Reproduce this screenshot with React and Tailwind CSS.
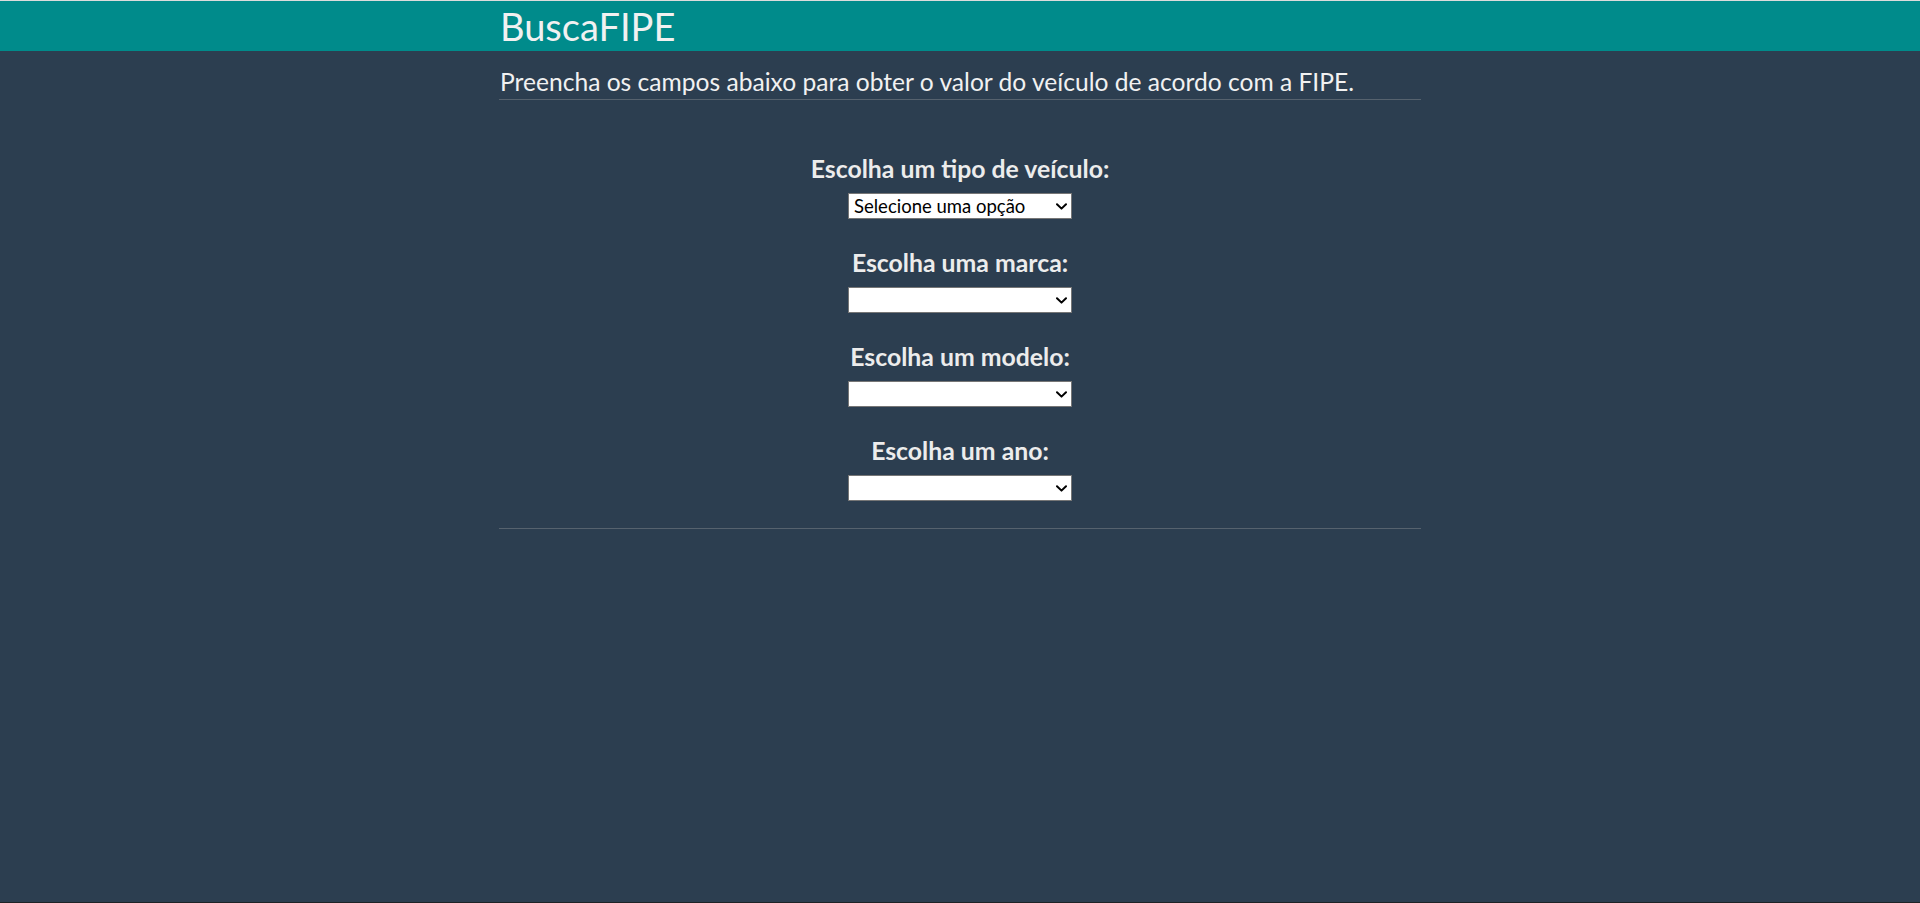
import React from "react";

function Field({ label, placeholder }) {
  return (
    <div className="flex flex-col items-center">
      <label className="text-[24.8px] leading-[29px] font-bold text-[#ececec]">{label}</label>
      <div className="relative mt-[10px] w-[224px] h-[26px]">
        <select
          className="appearance-none w-full h-full border border-[#767676] bg-white text-black text-[18.5px] leading-[22px] pl-[5px] pr-[20px] rounded-none outline-none"
          style={{ fontFamily: "Lato, 'Liberation Sans', sans-serif" }}
          defaultValue=""
        >
          {placeholder ? <option value="">{placeholder}</option> : <option value=""></option>}
        </select>
        <svg
          className="pointer-events-none absolute right-[5px] top-[10px]"
          width="11"
          height="7"
          viewBox="0 0 11 7"
          fill="none"
        >
          <path d="M1 1.2 L5.5 5.6 L10 1.2" stroke="#000" strokeWidth="2" strokeLinecap="round" strokeLinejoin="round" />
        </svg>
      </div>
    </div>
  );
}

export default function App() {
  return (
    <div
      className="h-screen flex flex-col bg-[#2c3e50] overflow-hidden"
      style={{ fontFamily: "Lato, 'Liberation Sans', sans-serif" }}
    >
      <div className="h-px bg-[#dcdcdc] shrink-0" />
      <header className="h-[50px] bg-[#008b8b] shrink-0">
        <div className="w-[922px] mx-auto pl-px">
          <h1 className="text-[38px] leading-[50px] font-normal text-[#f1f1f1]">BuscaFIPE</h1>
        </div>
      </header>
      <main className="flex-1">
        <div className="w-[922px] mx-auto">
          <p className="mt-4 pl-px text-[24.6px] leading-[29px] text-[#f1f1f1]">
            Preencha os campos abaixo para obter o valor do veículo de acordo com a FIPE.
          </p>
          <div className="mt-[3px] h-px bg-[#56626e]" />
          <div className="pt-[54px] pb-[27px] flex flex-col gap-[29px]">
            <Field label="Escolha um tipo de veículo:" placeholder="Selecione uma opção" />
            <Field label="Escolha uma marca:" />
            <Field label="Escolha um modelo:" />
            <Field label="Escolha um ano:" />
          </div>
          <div className="h-px bg-[#56626e]" />
        </div>
      </main>
      <div className="h-px bg-[#1f2326] shrink-0" />
    </div>
  );
}
